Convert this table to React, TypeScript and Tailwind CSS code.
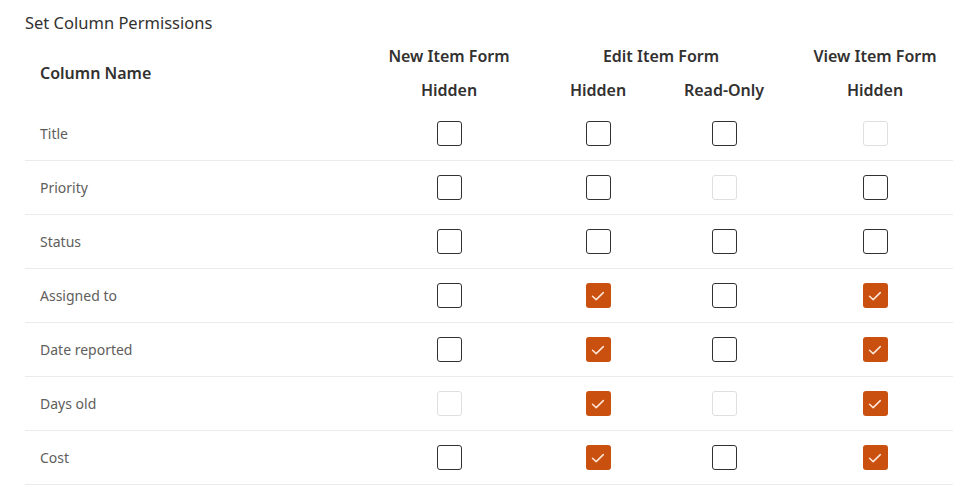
import React from "react";

type State = "off" | "on" | "disabled";

const rows: { name: string; cells: State[] }[] = [
  { name: "Title", cells: ["off", "off", "off", "disabled"] },
  { name: "Priority", cells: ["off", "off", "disabled", "off"] },
  { name: "Status", cells: ["off", "off", "off", "off"] },
  { name: "Assigned to", cells: ["off", "on", "off", "on"] },
  { name: "Date reported", cells: ["off", "on", "off", "on"] },
  { name: "Days old", cells: ["disabled", "on", "disabled", "on"] },
  { name: "Cost", cells: ["off", "on", "off", "on"] },
];

function Box({ state }: { state: State }) {
  if (state === "on") {
    return (
      <div className="flex h-[25px] w-[25px] items-center justify-center rounded-[3px] bg-[#ca5010]">
        <svg width="16" height="16" viewBox="0 0 16 16" fill="none">
          <path d="M2.5 8.3 L6.2 11.6 L13.3 4.6" stroke="#fde7d9" strokeWidth="1.5" strokeLinecap="round" strokeLinejoin="round" />
        </svg>
      </div>
    );
  }
  return (
    <div
      className={
        state === "disabled"
          ? "h-[25px] w-[25px] rounded-[3px] border border-[#e1dfdd] bg-white"
          : "h-[25px] w-[25px] rounded-[3px] border border-[#323130] bg-white"
      }
    />
  );
}

const cols = "grid grid-cols-[338px_172px_126px_126px_166px]";

export default function App() {
  return (
    <div className="h-[491px] w-[953px] overflow-hidden bg-white pl-[25px] text-[#323130]" style={{ fontFamily: '"Noto Sans", "Open Sans", sans-serif' }}>
      <div className="pt-[11px] text-[16.5px] leading-[24px]">Set Column Permissions</div>
      <div className={`${cols} mt-[4px] text-[16px] font-semibold`}>
        <div className="row-span-2 flex items-center pl-[15px]">Column Name</div>
        <div className="flex h-[34px] items-center justify-center">New Item Form</div>
        <div className="col-span-2 flex h-[34px] items-center justify-center">Edit Item Form</div>
        <div className="flex h-[34px] items-center justify-center pl-[10px]">View Item Form</div>
        <div className="flex h-[34px] items-center justify-center">Hidden</div>
        <div className="flex h-[34px] items-center justify-center">Hidden</div>
        <div className="flex h-[34px] items-center justify-center">Read-Only</div>
        <div className="flex h-[34px] items-center justify-center pl-[10px]">Hidden</div>
      </div>
      <div>
        {rows.map((r) => (
          <div key={r.name} className={`${cols} h-[54px] border-b border-[#edebe9]`}>
            <div className="flex items-center pl-[15px] text-[14px] text-[#605e5c]">{r.name}</div>
            {r.cells.map((c, i) => (
              <div key={i} className={i === 3 ? "flex items-center justify-center pl-[10px]" : "flex items-center justify-center"}>
                <Box state={c} />
              </div>
            ))}
          </div>
        ))}
      </div>
    </div>
  );
}
